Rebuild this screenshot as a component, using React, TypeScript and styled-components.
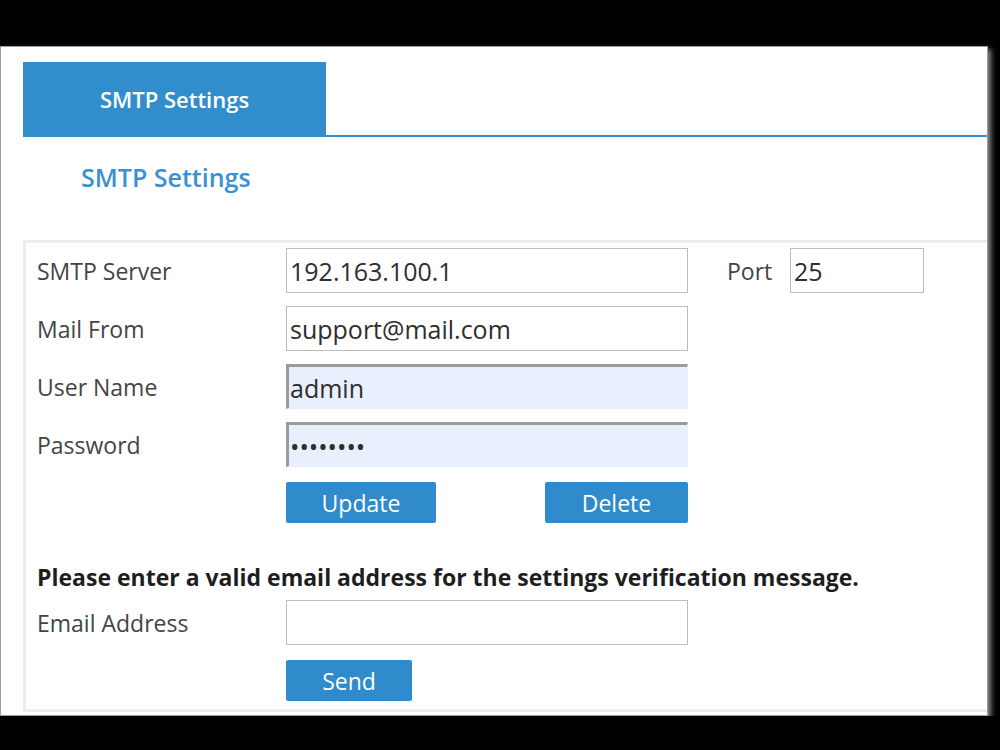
import React from 'react';
import styled, { createGlobalStyle } from 'styled-components';

const GlobalStyle = createGlobalStyle`
  html, body {
    margin: 0;
    padding: 0;
    background: #000;
  }
  body {
    font-family: "Open Sans", "Noto Sans", sans-serif;
    color: #333;
  }
`;

const Window = styled.div`
  box-sizing: border-box;
  margin-top: 46px;
  width: 988px;
  height: 670px;
  background: #fff;
  border: 1px solid #9c9c9c;
  box-shadow: 3px 3px 5px rgba(170, 170, 170, 0.8);
  padding: 15px 0 0 22px;
  display: flex;
  flex-direction: column;
`;

const TabBar = styled.div`
  display: flex;
  border-bottom: 2px solid #328dcd;
`;

const Tab = styled.div`
  width: 303px;
  height: 73px;
  background: #318dcc;
  color: #fff;
  font-size: 22px;
  font-weight: 600;
  display: flex;
  align-items: center;
  justify-content: center;
`;

const Heading = styled.h2`
  margin: 0;
  padding: 23px 0 0 58px;
  height: 103px;
  box-sizing: border-box;
  color: #3a90d2;
  font-size: 25px;
  font-weight: 600;
`;

const FormBox = styled.div`
  flex: 1;
  margin-bottom: 3px;
  border: 3px solid #e9eef3;
  border-right: none;
  padding: 5px 0 0 11px;
  display: flex;
  flex-direction: column;
`;

const Row = styled.div`
  display: flex;
  align-items: center;
  height: 45px;
  margin-bottom: 13px;
`;

const Label = styled.label<{ width?: number }>`
  width: ${p => p.width ?? 249}px;
  font-size: 23px;
  color: #444;
`;

const Field = styled.input<{ width?: number; filled?: boolean }>`
  box-sizing: border-box;
  width: ${p => p.width ?? 402}px;
  height: 45px;
  margin: 0;
  padding: 0 3px;
  font-family: inherit;
  font-size: 25px;
  color: #2e2e2e;
  outline: none;
  background: ${p => (p.filled ? '#e8f0fe' : '#fff')};
  border: 1px solid #bdbdbd;
  ${p =>
    p.filled &&
    `
    border-top: 3px solid #9b9b9b;
    border-left: 3px solid #9b9b9b;
    border-right: 1px solid #e8f0fe;
    border-bottom: 1px solid #e8f0fe;
    padding-left: 1px;
  `}
`;

const ButtonRow = styled.div`
  display: flex;
  justify-content: space-between;
  width: 402px;
  margin: 2px 0 0 249px;
`;

const Button = styled.button<{ width: number }>`
  width: ${p => p.width}px;
  height: 41px;
  margin: 0;
  padding: 0;
  border: none;
  border-radius: 2px;
  background: #2f8bcb;
  color: #fff;
  font-family: inherit;
  font-size: 23px;
  cursor: pointer;
`;

const Notice = styled.p`
  margin: 38px 0 7px;
  font-size: 23px;
  font-weight: 700;
  color: #1e1e1e;
`;

const App = () => {
  return (
    <>
      <GlobalStyle />
      <Window>
        <TabBar>
          <Tab>SMTP Settings</Tab>
        </TabBar>
        <Heading>SMTP Settings</Heading>
        <FormBox>
          <Row>
            <Label>SMTP Server</Label>
            <Field defaultValue="192.163.100.1" />
            <Label width={63} style={{ marginLeft: 39 }}>Port</Label>
            <Field width={134} defaultValue="25" />
          </Row>
          <Row>
            <Label>Mail From</Label>
            <Field defaultValue="support@mail.com" />
          </Row>
          <Row>
            <Label>User Name</Label>
            <Field filled defaultValue="admin" />
          </Row>
          <Row>
            <Label>Password</Label>
            <Field filled type="password" defaultValue="password" />
          </Row>
          <ButtonRow>
            <Button width={150}>Update</Button>
            <Button width={143}>Delete</Button>
          </ButtonRow>
          <Notice>Please enter a valid email address for the settings verification message.</Notice>
          <Row>
            <Label>Email Address</Label>
            <Field />
          </Row>
          <ButtonRow>
            <Button width={126}>Send</Button>
          </ButtonRow>
        </FormBox>
      </Window>
    </>
  );
};

export default App;
